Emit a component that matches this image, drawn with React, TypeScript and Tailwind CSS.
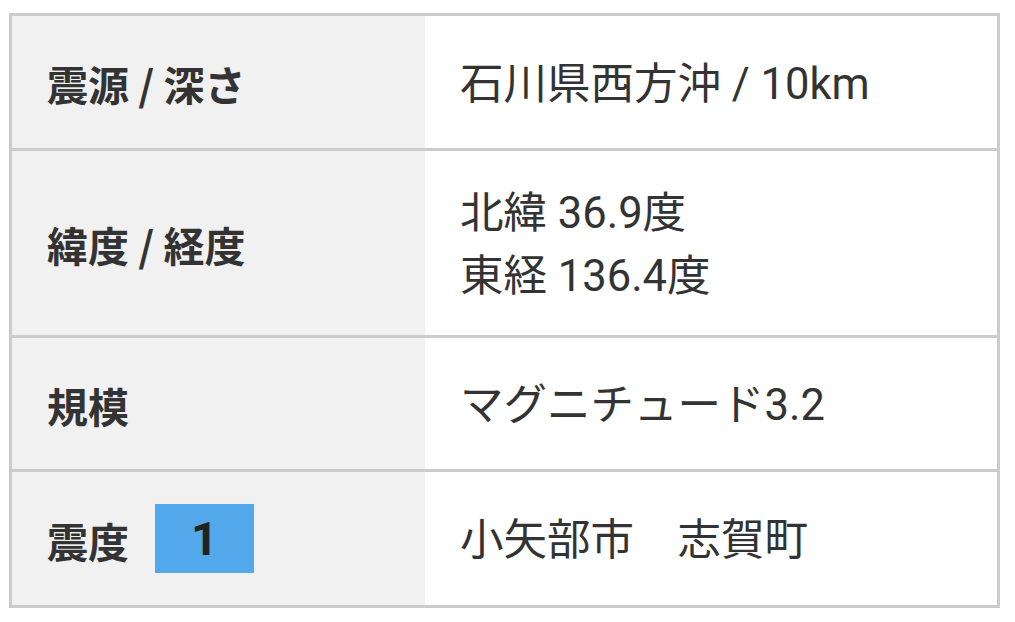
import React from "react";

interface QuakeRow {
  label: string;
  lines: string[];
  height: string;
  badge?: string;
}

// heights include the 3px top separator (border-box)
const rows: QuakeRow[] = [
  { label: "震源 / 深さ", lines: ["石川県西方沖 / 10km"], height: "h-[132px]" },
  { label: "緯度 / 経度", lines: ["北緯 36.9度", "東経 136.4度"], height: "h-[187px]" },
  { label: "規模", lines: ["マグニチュード3.2"], height: "h-[134px]" },
  { label: "震度", lines: ["小矢部市\u3000志賀町"], height: "h-[136px]", badge: "1" },
];

export default function App() {
  return (
    <div
      className="w-[1015px] h-[622px] bg-white pt-[13px] pl-[9px] text-[#333333]"
      style={{ fontFamily: 'Roboto, "Noto Sans CJK JP", sans-serif' }}
    >
      <div className="w-[991px] border-[3px] border-[#cccccc] flex flex-col">
        {rows.map((row, i) => (
          <div
            key={row.label}
            className={`flex ${row.height} ${i > 0 ? "border-t-[3px] border-[#cccccc]" : ""}`}
          >
            {/* Label cell */}
            <div className="w-[413px] bg-[#f1f1f1] flex items-center pl-[35px] gap-[26px] font-['Noto_Sans_CJK_JP',sans-serif]">
              <span className="text-[41px] font-bold leading-[63px] pt-[3px]">{row.label}</span>
              {row.badge && (
                <span className="w-[99px] h-[69px] bg-[#52a8ea] flex items-center justify-center font-['Roboto',sans-serif] text-[47px] leading-none font-bold text-[#222222]">
                  {row.badge}
                </span>
              )}
            </div>

            {/* Value cell */}
            <div className="flex-1 flex flex-col justify-center pl-[35px] pt-[4px]">
              {row.lines.map((line) => (
                <div key={line} className="text-[43.5px] leading-[63px] whitespace-pre">
                  {line}
                </div>
              ))}
            </div>
          </div>
        ))}
      </div>
    </div>
  );
}
